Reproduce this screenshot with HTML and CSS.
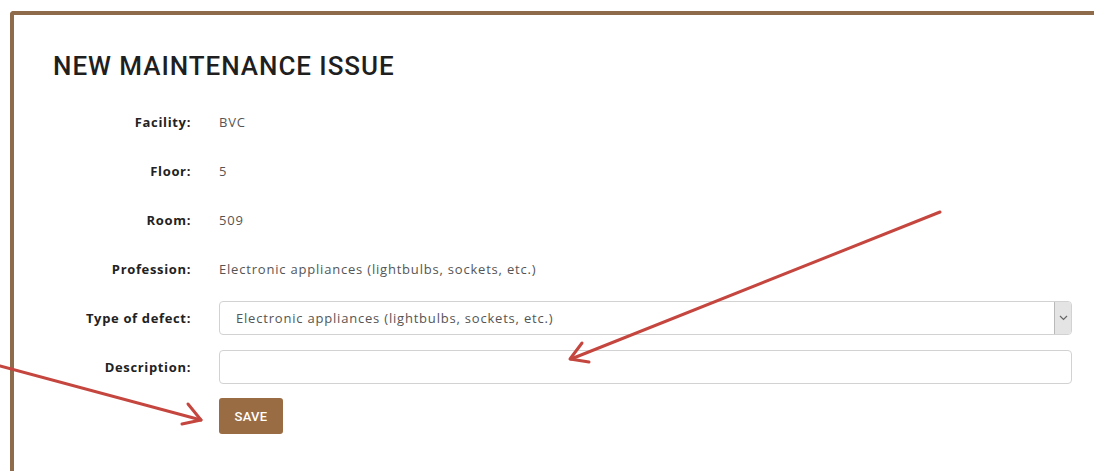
FILE: index.html
```html
<!DOCTYPE html>
<html lang="en">
<head>
<meta charset="utf-8">
<title>New maintenance issue</title>
<link rel="stylesheet" href="styles.css">
</head>
<body>
<div class="panel">
  <h1 class="title">NEW MAINTENANCE ISSUE</h1>
  <form class="issue-form">
    <label class="label">Facility:</label>
    <div class="value">BVC</div>

    <label class="label">Floor:</label>
    <div class="value">5</div>

    <label class="label">Room:</label>
    <div class="value">509</div>

    <label class="label">Profession:</label>
    <div class="value">Electronic appliances (lightbulbs, sockets, etc.)</div>

    <label class="label" for="defect">Type of defect:</label>
    <div class="select-box">
      <select id="defect" class="select">
        <option>Electronic appliances (lightbulbs, sockets, etc.)</option>
      </select>
      <span class="select-btn">
        <svg width="9" height="6" viewBox="0 0 9 6"><path d="M1 1l3.5 3.5L8 1" fill="none" stroke="#666" stroke-width="1.2"/></svg>
      </span>
    </div>

    <label class="label" for="desc">Description:</label>
    <div class="field"><input id="desc" class="input" type="text"></div>

    <div></div>
    <div class="field"><button type="button" class="save">SAVE</button></div>
  </form>
</div>

<svg class="marks" width="1094" height="471" viewBox="0 0 1094 471">
  <g fill="none" stroke="#c5463f" stroke-width="3" stroke-linecap="round" stroke-linejoin="round">
    <path d="M940 212 L571 359"/>
    <path d="M582 343 L570 359 L589 362"/>
    <path d="M0 366 L201 420"/>
    <path d="M188 404 L201 420 L182 424"/>
  </g>
</svg>
</body>
</html>
```
FILE: styles.css
```css
html, body {
  margin: 0;
  padding: 0;
  background: #fff;
}

body {
  font-family: "Open Sans", "DejaVu Sans", sans-serif;
  color: #222;
  width: 1094px;
  height: 471px;
  overflow: hidden;
  position: relative;
}

.panel {
  margin: 11px 0 0 10px;
  border-top: 4px solid #8d6b4b;
  border-left: 4px solid #8d6b4b;
  border-top-left-radius: 4px;
  padding: 36px 22px 40px 39px;
  height: 470px;
  box-sizing: border-box;
}

.title {
  margin: 0 0 23px 0;
  font-family: Roboto, "Open Sans", sans-serif;
  font-size: 26px;
  line-height: 31px;
  font-weight: 500;
  color: #1f1f1f;
  letter-spacing: 0.95px;
}

.issue-form {
  display: grid;
  grid-template-columns: 138px 1fr;
  column-gap: 28px;
  row-gap: 15px;
  grid-auto-rows: 34px;
  align-items: center;
}

.label {
  text-align: right;
  font-weight: 700;
  font-size: 13px;
  letter-spacing: 0.65px;
  color: #222;
}

.value {
  font-size: 13px;
  letter-spacing: 0.8px;
  color: #555;
}

.select-box {
  display: flex;
  height: 34px;
  box-sizing: border-box;
  border: 1px solid #d2d2d2;
  border-radius: 4px;
  background: #fff;
  overflow: hidden;
}

.select {
  flex: 1;
  appearance: none;
  -webkit-appearance: none;
  border: 0;
  outline: none;
  background: transparent;
  font-family: inherit;
  font-size: 13px;
  letter-spacing: 0.8px;
  color: #555;
  padding: 0 0 0 16px;
}

.select-btn {
  width: 16px;
  display: flex;
  align-items: center;
  justify-content: center;
  background: #e4e4e4;
  border-left: 1px solid #b9b9b9;
}

.field {
  display: flex;
  align-items: center;
}

.input {
  flex: 1;
  height: 34px;
  box-sizing: border-box;
  border: 1px solid #d2d2d2;
  border-radius: 4px;
  background: #fff;
  font-family: inherit;
  font-size: 13px;
  padding: 0 16px;
}

.save {
  width: 64px;
  height: 36px;
  border: 0;
  border-radius: 3px;
  background: #9a6c44;
  color: #fff;
  font-family: Roboto, "Open Sans", sans-serif;
  font-size: 13px;
  font-weight: 500;
  letter-spacing: 0.3px;
  cursor: pointer;
}

.marks {
  position: absolute;
  left: 0;
  top: 0;
  pointer-events: none;
}
```
